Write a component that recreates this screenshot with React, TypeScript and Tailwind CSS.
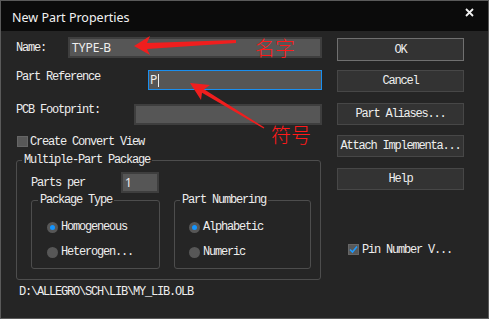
const mono = "font-['Liberation_Mono',monospace] text-[12px] tracking-[-1.2px] leading-[12px] text-[#eeeeee]";
const sans = "font-['Noto_Sans',sans-serif]";

function Radio({ checked }: { checked?: boolean }) {
  return (
    <span className="w-[11px] h-[11px] rounded-full bg-[#575757] flex items-center justify-center shrink-0">
      {checked && <span className="w-[5px] h-[5px] rounded-full bg-[#1495ff]" />}
    </span>
  );
}

function Check({ checked }: { checked?: boolean }) {
  return (
    <span className="w-[11px] h-[11px] bg-[#585858] border border-[#666] flex items-center justify-center shrink-0">
      {checked && (
        <svg width="9" height="9" viewBox="0 0 9 9">
          <path d="M1 4.5 L3.5 7 L8 1.5" fill="none" stroke="#1e9bff" strokeWidth="1.6" />
        </svg>
      )}
    </span>
  );
}

function Button({ label, primary, className }: { label: string; primary?: boolean; className: string }) {
  return (
    <div
      className={`w-[127px] flex items-center justify-center bg-[#333333] border ${
        primary ? "border-[#707070]" : "border-[#474747]"
      } ${mono} ${className}`}
    >
      {label}
    </div>
  );
}

export default function App() {
  return (
    <div className="relative w-[489px] h-[319px] bg-[#252525] border border-[#5a5a5a] flex flex-col overflow-hidden">
      {/* title bar */}
      <div className="h-[30px] bg-[#0b0b0b] flex items-start justify-between pl-[11px] pr-[14px] shrink-0">
        <span className={`${sans} mt-[8px] text-[12.5px] leading-[17px] text-[#f2f2f2]`}>New Part Properties</span>
        <svg className="mt-[7px]" width="9" height="9" viewBox="0 0 9 9">
          <path d="M1 1 L8 8 M8 1 L1 8" stroke="#f2f2f2" strokeWidth="1.8" />
        </svg>
      </div>

      <div className="flex flex-1">
        {/* left column */}
        <div className="w-[336px] pl-[15px] flex flex-col">
          <div className="mt-[6px] h-[21px] flex items-center">
            <span className={`w-[52px] ${mono}`}>Name:</span>
            <div className={`w-[254px] h-[21px] bg-[#565656] border-2 border-[#3e3e3e] pl-[2px] flex items-center ${sans} text-[12px] text-[#f0f0f0]`}>
              TYPE-B
            </div>
          </div>

          <div className="mt-[12px] h-[20px] flex items-start">
            <span className={`w-[132px] ${mono} leading-[14px]`}>Part Reference</span>
            <div className={`w-[174px] h-[20px] bg-[#565656] border border-[#1a8ff0] pl-[1px] flex items-center ${sans} text-[12px] text-[#f0f0f0]`}>
              P<span className="w-px h-[13px] bg-[#f0f0f0] ml-[1px]" />
            </div>
          </div>

          <div className="mt-[14px] h-[21px] flex items-start">
            <span className={`w-[118px] ${mono}`}>PCB Footprint:</span>
            <div className="w-[188px] h-[21px] bg-[#565656] border-2 border-[#3e3e3e]" />
          </div>

          <div className="mt-[11px] ml-[1px] h-[11px] flex items-center gap-[2px]">
            <Check />
            <span className={mono}>Create Convert View</span>
          </div>

          <fieldset className="mt-[7px] w-[305px] h-[126px] border border-[#4d4d4d] rounded-[3px] p-0 m-0 min-w-0">
            <legend className={`ml-[5px] px-[2px] ${mono}`}>Multiple-Part Package</legend>
            <div className="mt-[6px] ml-[14px] h-[21px] flex items-center">
              <span className={`w-[90px] ${mono}`}>Parts per</span>
              <div className={`w-[38px] h-[21px] bg-[#565656] border-2 border-[#3e3e3e] pl-[2px] flex items-center ${sans} text-[12px] text-[#f0f0f0]`}>
                1
              </div>
            </div>
            <div className="mt-[1px] ml-[14px] flex gap-[14px]">
              <fieldset className="w-[129px] h-[75px] border border-[#4d4d4d] rounded-[3px] p-0 m-0 min-w-0">
                <legend className={`ml-[6px] px-[2px] ${mono}`}>Package Type</legend>
                <div className="mt-[15px] ml-[15px] flex items-center gap-[3px]">
                  <Radio checked />
                  <span className={mono}>Homogeneous</span>
                </div>
                <div className="mt-[13px] ml-[15px] flex items-center gap-[3px]">
                  <Radio />
                  <span className={mono}>Heterogen...</span>
                </div>
              </fieldset>
              <fieldset className="w-[137px] h-[75px] border border-[#4d4d4d] rounded-[3px] p-0 m-0 min-w-0">
                <legend className={`ml-[5px] px-[2px] ${mono}`}>Part Numbering</legend>
                <div className="mt-[15px] ml-[14px] flex items-center gap-[3px]">
                  <Radio checked />
                  <span className={mono}>Alphabetic</span>
                </div>
                <div className="mt-[13px] ml-[14px] flex items-center gap-[3px]">
                  <Radio />
                  <span className={mono}>Numeric</span>
                </div>
              </fieldset>
            </div>
          </fieldset>

          <div className={`mt-[6px] ml-[3px] ${mono} text-[#e4e4e4]`}>D:\ALLEGRO\SCH\LIB\MY_LIB.OLB</div>
        </div>

        {/* right column */}
        <div className="w-[127px] flex flex-col">
          <Button label="OK" primary className="mt-[7px] h-[23px]" />
          <Button label="Cancel" className="mt-[9px] h-[22px]" />
          <Button label="Part Aliases..." className="mt-[11px] h-[22px]" />
          <Button label="Attach Implementa..." className="mt-[10px] h-[22px]" />
          <Button label="Help" className="mt-[11px] h-[22px]" />
          <div className="mt-[54px] ml-[11px] h-[11px] flex items-center gap-[3px]">
            <Check checked />
            <span className={mono}>Pin Number V...</span>
          </div>
        </div>
      </div>

      {/* red annotations */}
      <svg className="absolute left-0 top-0 pointer-events-none" width="489" height="319" viewBox="0 0 489 319">
        <polygon points="133,45 149,35 146,42 235,39 235,42 146,48 149,54" fill="#f01e1e" />
        <polygon points="189,82 209,84 203,88.3 263.4,126.4 262.6,127.6 201,91.7 200,99" fill="#f01e1e" />
      </svg>
      <span className="absolute left-[254px] top-[34px] font-['Noto_Sans_CJK_SC',sans-serif] font-light text-[20px] leading-[26px] text-[#ff1a1a]">
        名字
      </span>
      <span className="absolute left-[270px] top-[121px] font-['Noto_Sans_CJK_SC',sans-serif] font-light text-[20px] leading-[26px] text-[#ff1a1a]">
        符号
      </span>
    </div>
  );
}
